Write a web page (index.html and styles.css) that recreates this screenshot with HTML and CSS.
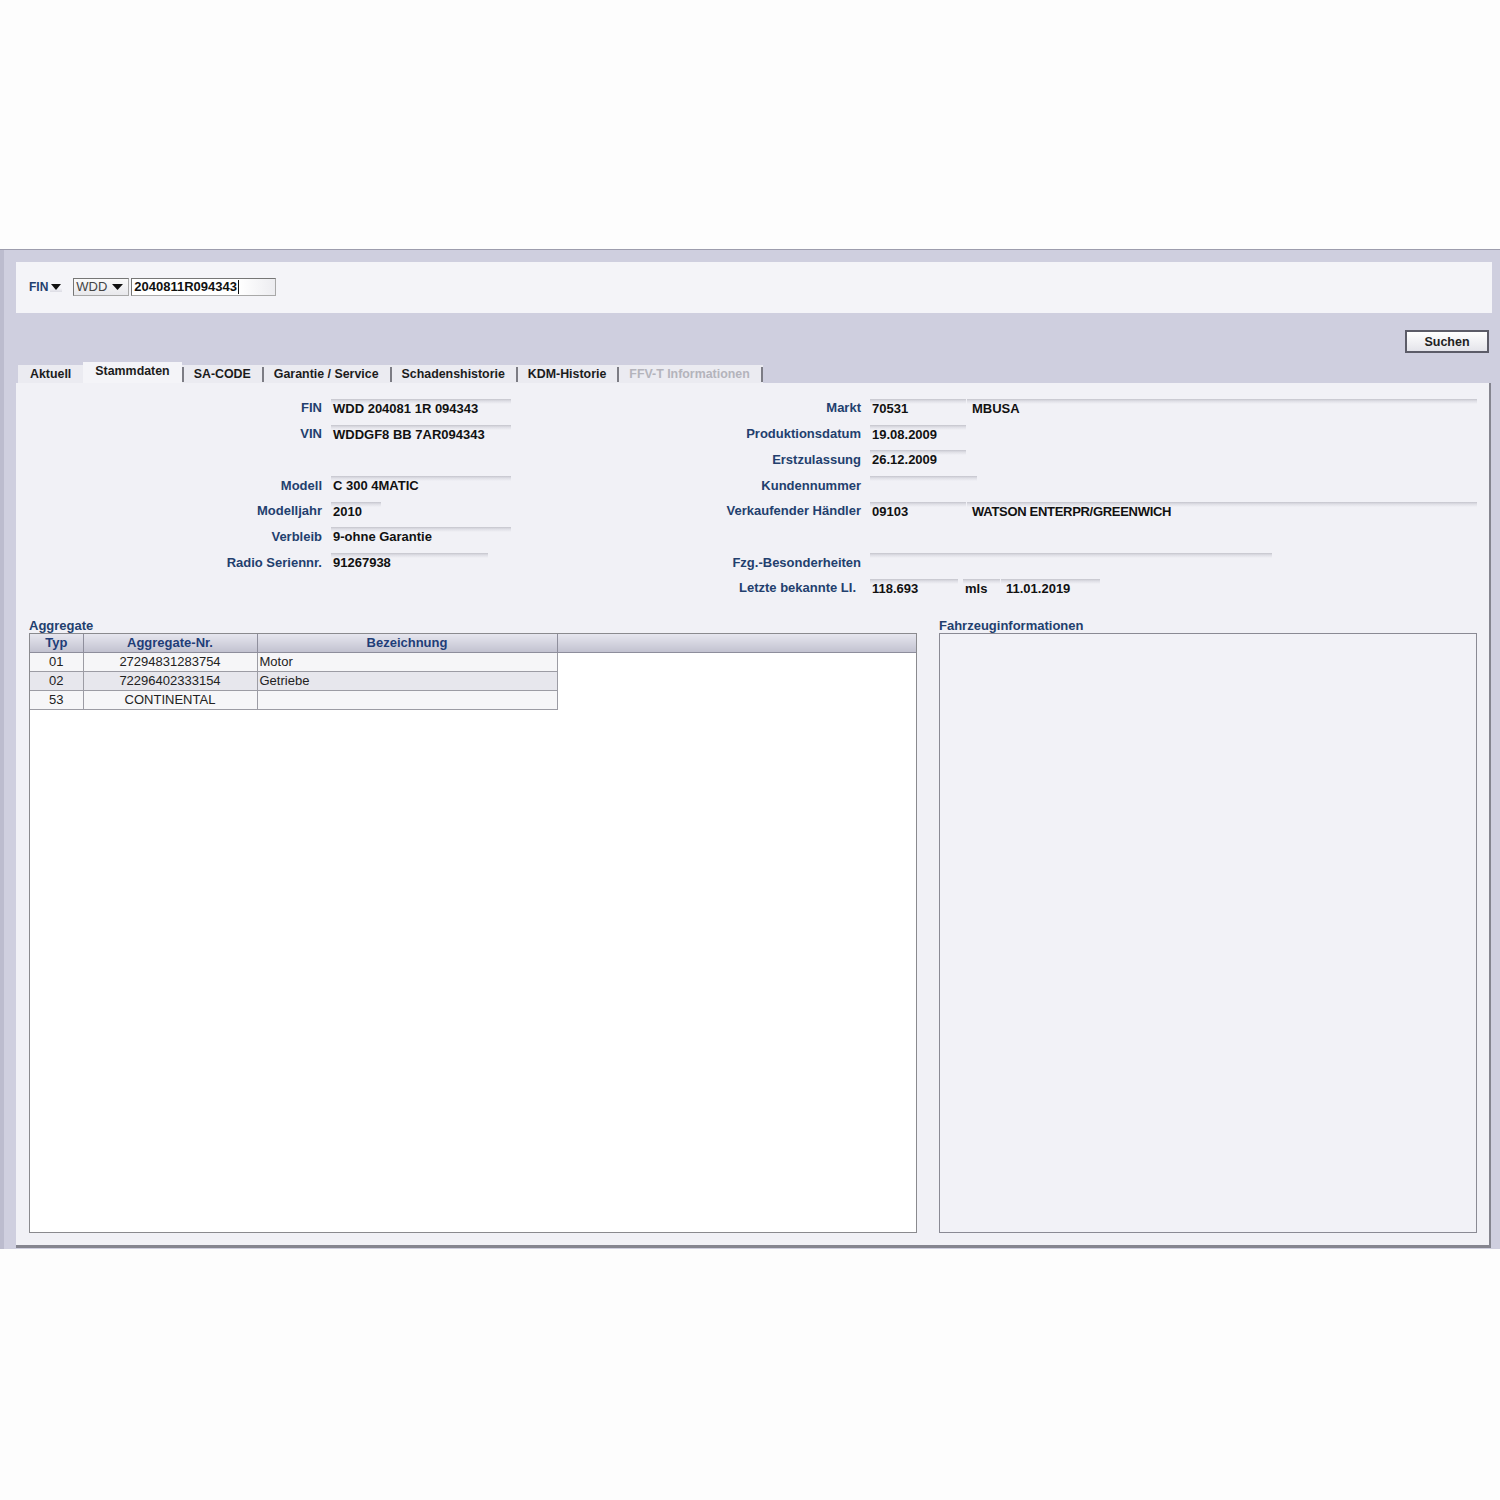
FILE: index.html
```html
<!DOCTYPE html>
<html lang="de">
<head>
<meta charset="utf-8">
<title>Stammdaten</title>
<link rel="stylesheet" href="styles.css">
</head>
<body>
<div class="app">
  <div class="toppanel">
    <span class="fin-label">FIN</span>
    <span class="fin-arrow"><svg width="10" height="6" viewBox="0 0 10 6"><path d="M0 0H10L5 6Z" fill="#111"/></svg></span>
    <span class="select"><span class="select-text">WDD</span><svg width="11" height="6" viewBox="0 0 11 6"><path d="M0 0H11L5.5 6Z" fill="#111"/></svg></span>
    <span class="input"><span class="input-text">2040811R094343</span></span>
  </div>

  <div class="actions">
    <button class="btn">Suchen</button>
  </div>

  <div class="tabs">
    <div class="tab first">Aktuell</div>
    <div class="tab active">Stammdaten</div>
    <span class="sep"></span>
    <div class="tab">SA-CODE</div>
    <span class="sep"></span>
    <div class="tab">Garantie / Service</div>
    <span class="sep"></span>
    <div class="tab">Schadenshistorie</div>
    <span class="sep"></span>
    <div class="tab">KDM-Historie</div>
    <span class="sep"></span>
    <div class="tab disabled">FFV-T Informationen</div>
    <span class="sep"></span>
  </div>

  <div class="main">
    <div class="form">
      <!-- row 1 -->
      <div class="lbl">FIN</div>
      <div class="val"><span class="fld w180">WDD 204081 1R 094343</span></div>
      <div class="lbl">Markt</div>
      <div class="val"><span class="fld w95">70531</span><span class="fld grow wide">MBUSA</span></div>
      <!-- row 2 -->
      <div class="lbl">VIN</div>
      <div class="val"><span class="fld w180">WDDGF8 BB 7AR094343</span></div>
      <div class="lbl">Produktionsdatum</div>
      <div class="val"><span class="fld w95">19.08.2009</span></div>
      <!-- row 3 -->
      <div class="lbl"></div>
      <div class="val"></div>
      <div class="lbl">Erstzulassung</div>
      <div class="val"><span class="fld w95">26.12.2009</span></div>
      <!-- row 4 -->
      <div class="lbl">Modell</div>
      <div class="val"><span class="fld w180">C 300 4MATIC</span></div>
      <div class="lbl">Kundennummer</div>
      <div class="val"><span class="fld w107"></span></div>
      <!-- row 5 -->
      <div class="lbl">Modelljahr</div>
      <div class="val"><span class="fld w50">2010</span></div>
      <div class="lbl">Verkaufender Händler</div>
      <div class="val"><span class="fld w95">09103</span><span class="fld grow wide narrow">WATSON ENTERPR/GREENWICH</span></div>
      <!-- row 6 -->
      <div class="lbl">Verbleib</div>
      <div class="val"><span class="fld w180">9-ohne Garantie</span></div>
      <div class="lbl"></div>
      <div class="val"></div>
      <!-- row 7 -->
      <div class="lbl">Radio Seriennr.</div>
      <div class="val"><span class="fld w157">91267938</span></div>
      <div class="lbl">Fzg.-Besonderheiten</div>
      <div class="val"><span class="fld w402"></span></div>
      <!-- row 8 -->
      <div class="lbl"></div>
      <div class="val"></div>
      <div class="lbl lbl-last">Letzte bekannte LI.</div>
      <div class="val"><span class="fld w88">118.693</span><span class="fld w37 gap5">mls</span><span class="fld w99 wide">11.01.2019</span></div>
    </div>

    <div class="bottom">
      <div class="section">
        <div class="section-title">Aggregate</div>
        <div class="tablebox">
          <table class="grid">
            <colgroup><col class="c-typ"><col class="c-nr"><col class="c-bez"><col></colgroup>
            <thead>
              <tr><th>Typ</th><th>Aggregate-Nr.</th><th>Bezeichnung</th><th class="filler"></th></tr>
            </thead>
            <tbody>
              <tr><td class="ctr">01</td><td class="ctr">27294831283754</td><td>Motor</td><td class="blank"></td></tr>
              <tr class="alt"><td class="ctr">02</td><td class="ctr">72296402333154</td><td>Getriebe</td><td class="blank"></td></tr>
              <tr><td class="ctr">53</td><td class="ctr">CONTINENTAL</td><td></td><td class="blank"></td></tr>
            </tbody>
          </table>
        </div>
      </div>
      <div class="section">
        <div class="section-title">Fahrzeuginformationen</div>
        <div class="infobox"></div>
      </div>
    </div>
  </div>
</div>
</body>
</html>
```

FILE: styles.css
```css
html, body {
  margin: 0;
  padding: 0;
}
body {
  background: #fdfdfd;
  font-family: "Liberation Sans", Arial, sans-serif;
  font-size: 13px;
  color: #111;
}

.app {
  margin-top: 249px;
  height: 1000px;
  box-sizing: border-box;
  border-top: 1px solid #9d9dad;
  background: #cfcfdf;
  box-shadow: inset 4px 0 0 #bcbcce;
  padding: 12px 8px 1px 16px;
  display: flex;
  flex-direction: column;
}

/* top search panel */
.toppanel {
  height: 51px;
  flex: none;
  background: #f4f4f8;
  display: flex;
  align-items: center;
  padding-left: 13px;
  padding-bottom: 2px;
  box-sizing: border-box;
}
.fin-label {
  font-weight: bold;
  font-size: 12px;
  color: #233f6e;
}
.fin-arrow {
  display: inline-flex;
  align-items: center;
  justify-content: center;
  width: 12px;
  height: 10px;
  margin-left: 2px;
  background: linear-gradient(to bottom, #f4f4f8 0, #f4f4f8 60%, #dcdce4 100%);
}
.select {
  display: inline-flex;
  align-items: center;
  box-sizing: border-box;
  width: 56px;
  height: 18px;
  margin-left: 11px;
  border: 1px solid #767676;
  border-right-color: #a8a8a8;
  border-bottom-color: #a8a8a8;
  background: linear-gradient(to bottom, #fafafa, #e8e8ec);
  padding-left: 2px;
}
.select-text {
  color: #444;
  font-size: 13px;
  width: 36px;
}
.input {
  display: inline-flex;
  align-items: center;
  box-sizing: border-box;
  width: 145px;
  height: 18px;
  margin-left: 2px;
  border: 1px solid #767676;
  border-right-color: #a8a8a8;
  border-bottom-color: #a8a8a8;
  background: linear-gradient(to right, #ffffff 0, #ffffff 75%, #ececf0 100%);
  padding-left: 2px;
}
.input-text {
  font-weight: bold;
  font-size: 13px;
  color: #111;
  border-right: 1px solid #111;
  padding-right: 1px;
  line-height: 14px;
}

/* search button */
.actions {
  display: flex;
  justify-content: flex-end;
  margin-top: 17px;
  padding-right: 3px;
  flex: none;
}
.btn {
  width: 84px;
  height: 23px;
  box-sizing: border-box;
  border: 2px solid #5c5c68;
  background: linear-gradient(to bottom, #ffffff, #e4e4ea);
  font-family: "Liberation Sans", Arial, sans-serif;
  font-size: 12.5px;
  font-weight: bold;
  color: #222;
  padding: 0;
  margin: 0;
}

/* tabs */
.tabs {
  display: flex;
  align-items: flex-end;
  margin-top: 9px;
  margin-left: 2px;
  height: 21px;
  flex: none;
}
.tab {
  height: 18px;
  line-height: 19px;
  padding: 0 11px 0 10px;
  background: #ebebf1;
  font-weight: bold;
  font-size: 12.4px;
  color: #1c1c1c;
  white-space: nowrap;
}
.tab.first {
  padding-left: 12px;
  padding-right: 12px;
}
.tab.active {
  height: 21px;
  line-height: 19px;
  padding: 0 12px 0 12px;
  background: #f4f4f8;
}
.tab.disabled {
  color: #b4b4bc;
}
.sep {
  width: 2px;
  height: 18px;
  background: linear-gradient(to bottom, #ebebf1 0, #ebebf1 2px, #7c7c84 2px, #7c7c84 17px, #ebebf1 17px);
}

/* main panel */
.main {
  flex: 1;
  margin-right: 1px;
  background: #f1f1f6;
  border-right: 2px solid #85858f;
  border-bottom: 3px solid #85858f;
  padding: 12px 12px 12px 13px;
  display: flex;
  flex-direction: column;
  min-height: 0;
}

.form {
  display: grid;
  grid-template-columns: 302px 395px 144px 1fr;
  grid-template-rows: repeat(8, 25.72px);
  flex: none;
}
.lbl {
  display: flex;
  align-items: center;
  justify-content: flex-end;
  padding-right: 9px;
  font-weight: bold;
  color: #233f6e;
  white-space: nowrap;
}
.lbl-last {
  padding-right: 14px;
}
.val {
  display: flex;
  align-items: center;
}
.fld {
  display: inline-block;
  box-sizing: border-box;
  height: 18px;
  line-height: 20px;
  padding-left: 2px;
  font-weight: bold;
  color: #111;
  white-space: nowrap;
  background: linear-gradient(to bottom, #c4c4cc 0, #dedee5 2px, rgba(241, 241, 246, 0) 5px);
}
.fld.wide { padding-left: 5px; }
.fld.grow { flex: 1; margin-left: 1px; }
.fld.narrow { letter-spacing: -0.3px; }
.w37 { width: 37px; }
.w50 { width: 50px; }
.w88 { width: 88px; }
.w95 { width: 96px; }
.w99 { width: 99px; margin-left: 1px; }
.w107 { width: 107px; }
.w157 { width: 157px; }
.w180 { width: 180px; }
.w402 { width: 402px; }
.gap5 { margin-left: 5px; }

/* bottom area */
.bottom {
  flex: 1;
  margin-top: 17px;
  display: grid;
  grid-template-columns: 888px 1fr;
  column-gap: 22px;
  min-height: 0;
}
.section {
  display: flex;
  flex-direction: column;
  min-height: 0;
}
.section-title {
  font-weight: bold;
  color: #233f6e;
  line-height: 16px;
  height: 15px;
}
.tablebox {
  flex: 1;
  background: #ffffff;
  border: 1px solid #8a8a8e;
  box-sizing: border-box;
}
.infobox {
  flex: 1;
  background: #f2f2f7;
  border: 1px solid #8a8a94;
  box-sizing: border-box;
}

table.grid {
  width: 100%;
  border-collapse: collapse;
  table-layout: fixed;
  font-size: 13px;
}
col.c-typ { width: 53px; }
col.c-nr { width: 174px; }
col.c-bez { width: 300px; }
table.grid th {
  height: 19px;
  padding: 0;
  box-sizing: border-box;
  background: linear-gradient(to bottom, #e6e6ee, #c2c2d0);
  border-right: 1px solid #8e8e9c;
  border-bottom: 1px solid #8e8e9c;
  font-weight: bold;
  color: #1f3d78;
  text-align: center;
  line-height: 18px;
}
table.grid th.filler {
  border-right: none;
}
table.grid td {
  height: 19px;
  padding: 0 2px;
  box-sizing: border-box;
  border-right: 1px solid #9c9ca4;
  border-bottom: 1px solid #9c9ca4;
  background: #f6f6f8;
  color: #222;
  line-height: 18px;
  white-space: nowrap;
}
table.grid td.ctr { text-align: center; }
table.grid tr.alt td { background: #e7e7ed; }
table.grid td.blank {
  background: #ffffff;
  border: none;
}
table.grid tr.alt td.blank { background: #ffffff; }
```
